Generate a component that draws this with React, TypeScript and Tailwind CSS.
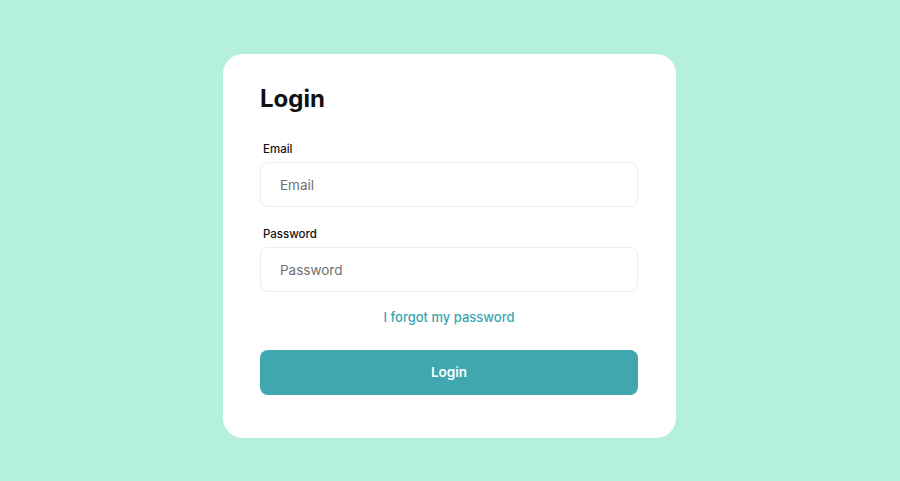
export default function App() {
  return (
    <div className="w-[900px] h-[481px] bg-[#b4f0db] flex pl-[223px] pt-[54px]" style={{ fontFamily: "Inter, 'Noto Sans', sans-serif" }}>
      <div className="w-[453px] h-[384px] bg-white rounded-[20px] pl-[37px] pr-[38px] pt-[29px]">
        <h1 className="text-[24px] leading-[32px] font-bold text-[#111]">Login</h1>
        <div className="mt-[26px]">
          <label className="block pl-[3px] text-[11.5px] leading-[16px] font-medium text-[#111]">Email</label>
          <input placeholder="Email" className="mt-[5px] w-full h-[45px] border border-[#ebebf3] rounded-[8px] px-[19px] text-[13.5px] text-[#333] placeholder:text-[#6f6f6f] outline-none" />
        </div>
        <div className="mt-[19px]">
          <label className="block pl-[3px] text-[11.5px] leading-[16px] font-medium text-[#111]">Password</label>
          <input type="password" placeholder="Password" className="mt-[5px] w-full h-[45px] border border-[#ebebf3] rounded-[8px] px-[19px] text-[13.5px] text-[#333] placeholder:text-[#6f6f6f] outline-none" />
        </div>
        <div className="mt-[12px] text-center">
          <a className="text-[13px] leading-[17px] font-[550] text-[#3aa5b0]">I forgot my password</a>
        </div>
        <button className="mt-[22px] w-full h-[45px] rounded-[8px] bg-[#40a7b1] text-white text-[13.5px] font-semibold">Login</button>
      </div>
    </div>
  );
}
